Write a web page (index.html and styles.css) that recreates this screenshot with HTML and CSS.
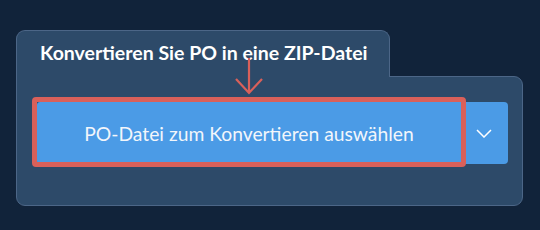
FILE: index.html
```html
<!DOCTYPE html>
<html lang="de">
<head>
<meta charset="utf-8">
<link rel="stylesheet" href="styles.css">
</head>
<body>
<div class="card">
  <div class="tab"><h2 class="title">Konvertieren Sie PO in eine ZIP-Datei</h2></div>
  <div class="body">
    <div class="btn-group">
      <button class="btn-main">PO-Datei zum Konvertieren auswählen</button>
      <button class="btn-drop" aria-label="Mehr">
        <svg width="16" height="9" viewBox="0 0 16 9"><path d="M1 1l7 7 7-7" fill="none" stroke="#fff" stroke-width="1.5"/></svg>
      </button>
      <div class="highlight"></div>
      <svg class="arrow" width="30" height="38" viewBox="0 0 30 38"><path d="M15 0v35M2 21l13 14 13-14" fill="none" stroke="#d9605a" stroke-width="2.2"/></svg>
    </div>
  </div>
</div>
</body>
</html>
```
FILE: styles.css
```css
html, body { margin: 0; padding: 0; }
body {
  background: #11233a;
  width: 540px;
  height: 230px;
  font-family: Lato, "Liberation Sans", sans-serif;
  padding: 30px 0 0 16px;
  box-sizing: border-box;
}
.card { width: 507px; }
.tab {
  position: relative;
  z-index: 1;
  width: 374px;
  height: 47px;
  box-sizing: border-box;
  background: #2d4a69;
  border: 1px solid #4c6687;
  border-bottom: none;
  border-radius: 9px 9px 0 0;
  margin-bottom: -1px;
  padding: 10px 0 0 23px;
}
.title {
  margin: 0;
  font-size: 19.5px;
  line-height: 24px;
  font-weight: 700;
  color: #fff;
  white-space: nowrap;
}
.body {
  height: 130px;
  box-sizing: border-box;
  background: #2d4a69;
  border: 1px solid #4c6687;
  border-radius: 0 9px 9px 9px;
  padding: 25px 0 0 20px;
}
.btn-group {
  position: relative;
  display: flex;
  width: 471px;
  height: 62px;
}
.btn-main, .btn-drop {
  border: none;
  background: #4b9be6;
  color: #f2f6fb;
  font-family: inherit;
  margin: 0;
  padding: 0;
}
.btn-main {
  width: 424px;
  font-size: 19.3px;
  font-weight: 400;
  border-radius: 3px 0 0 3px;
}
.btn-drop {
  flex: 1;
  display: flex;
  align-items: center;
  justify-content: center;
  border-radius: 0 4px 4px 0;
  padding-right: 1px;
}
.highlight {
  position: absolute;
  left: -5px;
  top: -5px;
  width: 434px;
  height: 70px;
  box-sizing: border-box;
  border: 5px solid #d9605a;
  border-radius: 4px;
  pointer-events: none;
}
.arrow {
  position: absolute;
  z-index: 2;
  left: 197px;
  top: -44px;
}
```
